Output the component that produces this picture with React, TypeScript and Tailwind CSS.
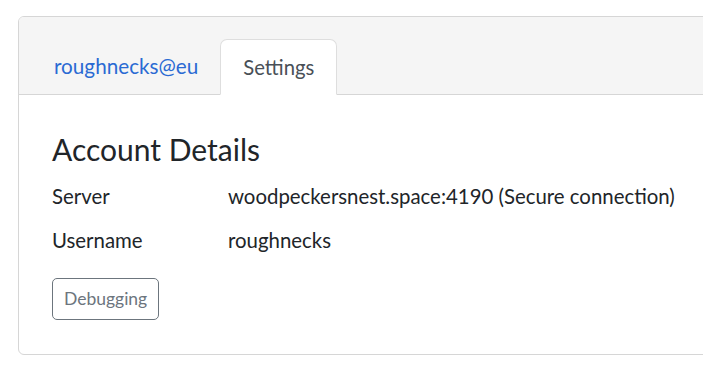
export default function App() {
  const rows = [
    { label: 'Server', value: 'woodpeckersnest.space:4190 (Secure connection)' },
    { label: 'Username', value: 'roughnecks' },
  ]

  return (
    <div className="min-h-screen bg-white pt-[16px] pl-[18px] overflow-hidden" style={{ fontFamily: 'Lato, "Open Sans", sans-serif' }}>
      <div className="w-[720px] border border-[#d6d6d6] rounded-[6px] overflow-hidden">
        <div className="bg-[#f5f5f5] border-b border-[#d6d6d6] pt-[22px] pl-[11px] flex items-end">
          <div className="h-[56px] -mb-px pl-[23px] pr-[21px] flex items-center text-[20.7px] text-[#2a6ad3] border border-transparent">
            roughnecks@eu
          </div>
          <div className="h-[56px] -mb-px px-[22px] flex items-center text-[20.3px] text-[#495057] bg-white border border-[#dedede] border-b-white rounded-t-[7px]">
            Settings
          </div>
        </div>

        <div className="px-[33px] pt-[36px] pb-[34px] text-[#212529]">
          <h4 className="text-[30px] leading-[36px]">Account Details</h4>

          <div className="mt-[14px] flex flex-col gap-[14px]">
            {rows.map(r => (
              <div key={r.label} className="flex text-[20.4px] leading-[30px]">
                <div className="w-[176px]">{r.label}</div>
                <div>{r.value}</div>
              </div>
            ))}
          </div>

          <button className="mt-[23px] h-[42px] px-[11px] border border-[#6c757d] rounded-[5px] text-[17.5px] text-[#6c757d] bg-white">
            Debugging
          </button>
        </div>
      </div>
    </div>
  )
}
